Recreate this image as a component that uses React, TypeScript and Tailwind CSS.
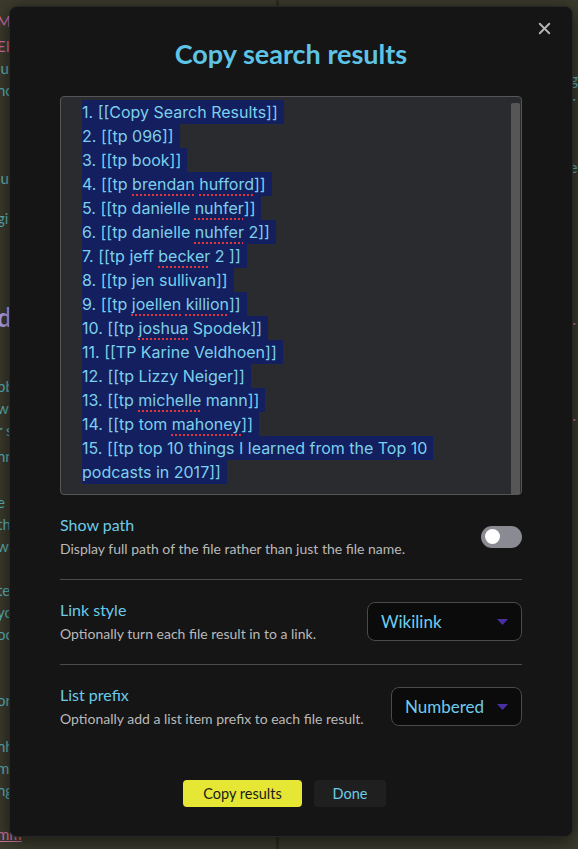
import { X } from 'lucide-react';

const RESULTS: { n: string; parts: (string | { typo: string })[] }[] = [
  { n: '1.', parts: ['[[Copy Search Results]]'] },
  { n: '2.', parts: ['[[tp 096]]'] },
  { n: '3.', parts: ['[[tp book]]'] },
  { n: '4.', parts: ['[[tp ', { typo: 'brendan' }, ' ', { typo: 'hufford' }, ']]'] },
  { n: '5.', parts: ['[[tp danielle ', { typo: 'nuhfer' }, ']]'] },
  { n: '6.', parts: ['[[tp danielle ', { typo: 'nuhfer' }, ' 2]]'] },
  { n: '7.', parts: ['[[tp jeff ', { typo: 'becker' }, ' 2 ]]'] },
  { n: '8.', parts: ['[[tp jen sullivan]]'] },
  { n: '9.', parts: ['[[tp ', { typo: 'joellen' }, ' ', { typo: 'killion' }, ']]'] },
  { n: '10.', parts: ['[[tp ', { typo: 'joshua' }, ' Spodek]]'] },
  { n: '11.', parts: ['[[TP Karine Veldhoen]]'] },
  { n: '12.', parts: ['[[tp Lizzy Neiger]]'] },
  { n: '13.', parts: ['[[tp ', { typo: 'michelle' }, ' mann]]'] },
  { n: '14.', parts: ['[[tp tom ', { typo: 'mahoney' }, ']]'] },
  { n: '15.', parts: ['[[tp top 10 things I learned from the Top 10'] },
  { n: '', parts: ['podcasts in 2017]]'] },
];

const Select = ({ value, width }: { value: string; width: string }) => (
  <div
    className={`${width} h-[39px] shrink-0 rounded-lg border border-[#4a4a4a] bg-[#0b0b0b] flex items-center justify-between pl-[13px] pr-[13px]`}
  >
    <span className="text-[17px] text-[#6fcdeb]">{value}</span>
    <svg width="11" height="6" viewBox="0 0 11 6">
      <path d="M0 0 H11 L5.5 6 Z" fill="#4a2fa3" />
    </svg>
  </div>
);

const Setting = ({
  label,
  desc,
  children,
  first,
}: {
  label: string;
  desc: string;
  children: React.ReactNode;
  first?: boolean;
}) => (
  <div
    className={`flex items-center justify-between pt-[20px] pb-[21px] ${first ? '' : 'border-t border-[#4b4b4b]'}`}
  >
    <div className="flex flex-col gap-[5px]">
      <span className="text-[16px] leading-[20px] text-[#6ccbe8]">{label}</span>
      <span className="text-[14px] leading-[18px] text-[#b9b9b9]">{desc}</span>
    </div>
    {children}
  </div>
);

export default function App() {
  return (
    <div className="relative w-[578px] h-[849px] overflow-hidden bg-[#3c3b2d] font-['Lato',sans-serif]">
      {/* workspace behind the modal */}
      <div className="flex h-full">
        <div className="w-[288px] border-r-[3px] border-[#2c2c22] pt-[10px] -ml-[3px] text-[15px] leading-[22px] text-[#5cb7bd]">
          <div className="text-[#d372a6]">Mo</div>
          <div className="h-[3px]" />
          <div className="text-[#d372a6]">EI</div>
          <div>ju</div>
          <div>nc</div>
          <div className="h-[66px]" />
          <div>lu</div>
          <div className="h-[18px]" />
          <div>gi</div>
          <div className="h-[70px]" />
          <div className="text-[26px] leading-[36px] font-bold text-[#b9a6f0]">dd</div>
          <div className="h-[40px]" />
          <div>bb</div>
          <div>wo</div>
          <div>r s</div>
          <div className="h-[4px]" />
          <div>nn</div>
          <div className="h-[24px]" />
          <div>e a</div>
          <div>th</div>
          <div>wi</div>
          <div className="h-[22px]" />
          <div>te</div>
          <div>yo</div>
          <div>oo</div>
          <div className="h-[44px]" />
          <div>or</div>
          <div className="h-[24px]" />
          <div>hh</div>
          <div>mm</div>
          <div>ng</div>
          <div className="h-[22px]" />
          <div className="text-[#d372a6] underline">mm</div>
        </div>
        <div className="flex-1 pl-[283px] pt-[2px] text-[15px] leading-[22px] text-[#5cb7bd]">
          <div>l</div>
          <div className="h-[22px]" />
          <div>l</div>
          <div>gg</div>
          <div>ar</div>
          <div className="h-[44px]" />
          <div>ce</div>
          <div className="h-[26px]" />
          <div className="underline text-[#9a9a8a]">a</div>
          <div className="h-[18px]" />
          <div>e</div>
          <div className="h-[48px]" />
          <div className="text-[#d372a6]">ar</div>
          <div className="h-[30px]" />
          <div>e</div>
          <div className="h-[22px]" />
          <div className="text-[#d372a6]">ar</div>
        </div>
      </div>

      {/* modal */}
      <div className="absolute left-[9px] top-[6px] w-[564px] h-[831px] rounded-lg border border-[#262626] bg-[#151515] px-[50px] shadow-[0_4px_20px_rgba(0,0,0,0.6)]">
        <button className="absolute right-[18px] top-[12px] text-[#b4b4b4]">
          <X size={19} strokeWidth={2.4} />
        </button>

        <h1 className="pt-[27px] h-[89px] text-center text-[27px] leading-[40px] font-bold text-[#5ec3e4]">
          Copy search results
        </h1>

        <div className="relative h-[399px] rounded-[4px] border border-[#565656] bg-[#2a2b2f] pt-[3px] pl-[21px] font-['Inter',sans-serif] text-[16px] leading-[24px] text-[#7dd0ec]">
          {RESULTS.map((r, i) => (
            <div key={i} className="h-[24px]">
              <span className="inline-block bg-[#131f5e] pr-[6px]">
                {r.n && <>{r.n} </>}
                {r.parts.map((p, j) =>
                  typeof p === 'string' ? (
                    <span key={j} className="whitespace-pre">{p}</span>
                  ) : (
                    <span
                      key={j}
                      className="underline decoration-dotted decoration-[#e0343a] decoration-2 underline-offset-[4px]"
                    >
                      {p.typo}
                    </span>
                  )
                )}
              </span>
            </div>
          ))}
          <div className="absolute right-[1px] top-[6px] bottom-0 w-[9px] rounded-t-[2px] bg-[#565656]" />
        </div>

        <Setting first label="Show path" desc="Display full path of the file rather than just the file name.">
          <div className="w-[41px] h-[22px] rounded-full bg-[#8a8a93] flex items-center pl-[4px]">
            <div className="w-[15px] h-[15px] rounded-full bg-white" />
          </div>
        </Setting>
        <Setting label="Link style" desc="Optionally turn each file result in to a link.">
          <Select value="Wikilink" width="w-[155px]" />
        </Setting>
        <Setting label="List prefix" desc="Optionally add a list item prefix to each file result.">
          <Select value="Numbered" width="w-[131px]" />
        </Setting>

        <div className="mt-[31px] flex justify-center gap-[12px] pr-[13px]">
          <button className="w-[119px] h-[27px] rounded-[4px] bg-[#e6e634] text-[14.5px] text-[#1a1a1a]">
            Copy results
          </button>
          <button className="w-[72px] h-[27px] rounded-[4px] bg-[#1f1f1f] text-[14.5px] text-[#6ccbe8]">
            Done
          </button>
        </div>
      </div>
    </div>
  );
}
